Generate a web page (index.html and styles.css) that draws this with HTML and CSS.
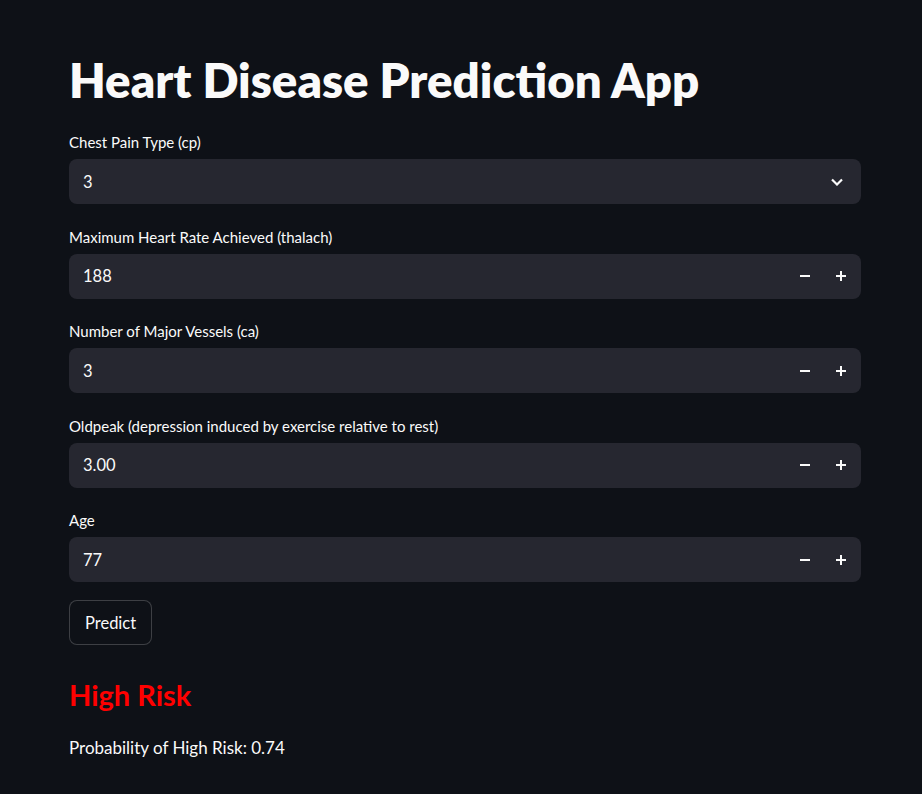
FILE: index.html
```html
<!DOCTYPE html>
<html lang="en">
<head>
<meta charset="utf-8">
<title>Heart Disease Prediction App</title>
<link rel="stylesheet" href="styles.css">
</head>
<body>
<main class="app">
  <h1 class="title">Heart Disease Prediction App</h1>

  <div class="field">
    <label class="label">Chest Pain Type (cp)</label>
    <div class="box">
      <span class="value">3</span>
      <svg class="chev" width="12" height="8" viewBox="0 0 12 8"><path d="M1 1.5 L6 6.5 L11 1.5" fill="none" stroke="#fafafa" stroke-width="2.2"/></svg>
    </div>
  </div>

  <div class="field">
    <label class="label">Maximum Heart Rate Achieved (thalach)</label>
    <div class="box">
      <span class="value">188</span>
      <div class="steps"><span class="minus"></span><span class="plus"></span></div>
    </div>
  </div>

  <div class="field">
    <label class="label">Number of Major Vessels (ca)</label>
    <div class="box">
      <span class="value">3</span>
      <div class="steps"><span class="minus"></span><span class="plus"></span></div>
    </div>
  </div>

  <div class="field">
    <label class="label">Oldpeak (depression induced by exercise relative to rest)</label>
    <div class="box">
      <span class="value">3.00</span>
      <div class="steps"><span class="minus"></span><span class="plus"></span></div>
    </div>
  </div>

  <div class="field">
    <label class="label">Age</label>
    <div class="box">
      <span class="value">77</span>
      <div class="steps"><span class="minus"></span><span class="plus"></span></div>
    </div>
  </div>

  <button class="btn">Predict</button>

  <h2 class="risk">High Risk</h2>
  <p class="prob">Probability of High Risk: 0.74</p>
</main>
</body>
</html>
```

FILE: styles.css
```css
html, body {
  margin: 0;
  padding: 0;
  background: #0e1117;
  color: #fafafa;
  font-family: Lato, "Noto Sans", sans-serif;
}
.app {
  width: 792px;
  padding: 50px 0 0 69px;
  display: flex;
  flex-direction: column;
  align-items: stretch;
}
.title {
  margin: 0 0 22px 0;
  font-size: 47.4px;
  font-weight: 800;
  line-height: 60px;
  letter-spacing: 0;
}
.field {
  display: flex;
  flex-direction: column;
  margin-bottom: 22.5px;
}
.label {
  font-size: 15px;
  line-height: 20px;
  height: 20px;
  margin-bottom: 7px;
}
.box {
  height: 45px;
  background: #262730;
  border-radius: 8px;
  display: flex;
  align-items: center;
  padding: 0 14px;
}
.value {
  flex: 1;
  font-size: 16.5px;
}
.chev { margin-right: 4px; }
.steps {
  display: flex;
  align-items: center;
  gap: 26px;
  margin-right: 1px;
}
.minus, .plus {
  position: relative;
  width: 10px;
  height: 10px;
}
.minus::before, .plus::before, .plus::after {
  content: "";
  position: absolute;
  background: #fafafa;
}
.minus::before, .plus::before {
  left: 0; top: 4px; width: 10px; height: 2px;
}
.plus::after {
  left: 4px; top: 0; width: 2px; height: 10px;
}
.btn {
  align-self: flex-start;
  margin-top: -4.5px;
  height: 45px;
  padding: 0 15px;
  background: #0e1117;
  color: #fafafa;
  border: 1px solid rgba(250,250,250,0.2);
  border-radius: 8px;
  font-family: inherit;
  font-size: 16.5px;
}
.risk {
  margin: 30px 0 0 0;
  color: #ff0000;
  font-size: 29px;
  font-weight: 700;
  line-height: 40px;
}
.prob {
  margin: 21px 0 0 0;
  font-size: 17px;
  line-height: 24px;
}
```
